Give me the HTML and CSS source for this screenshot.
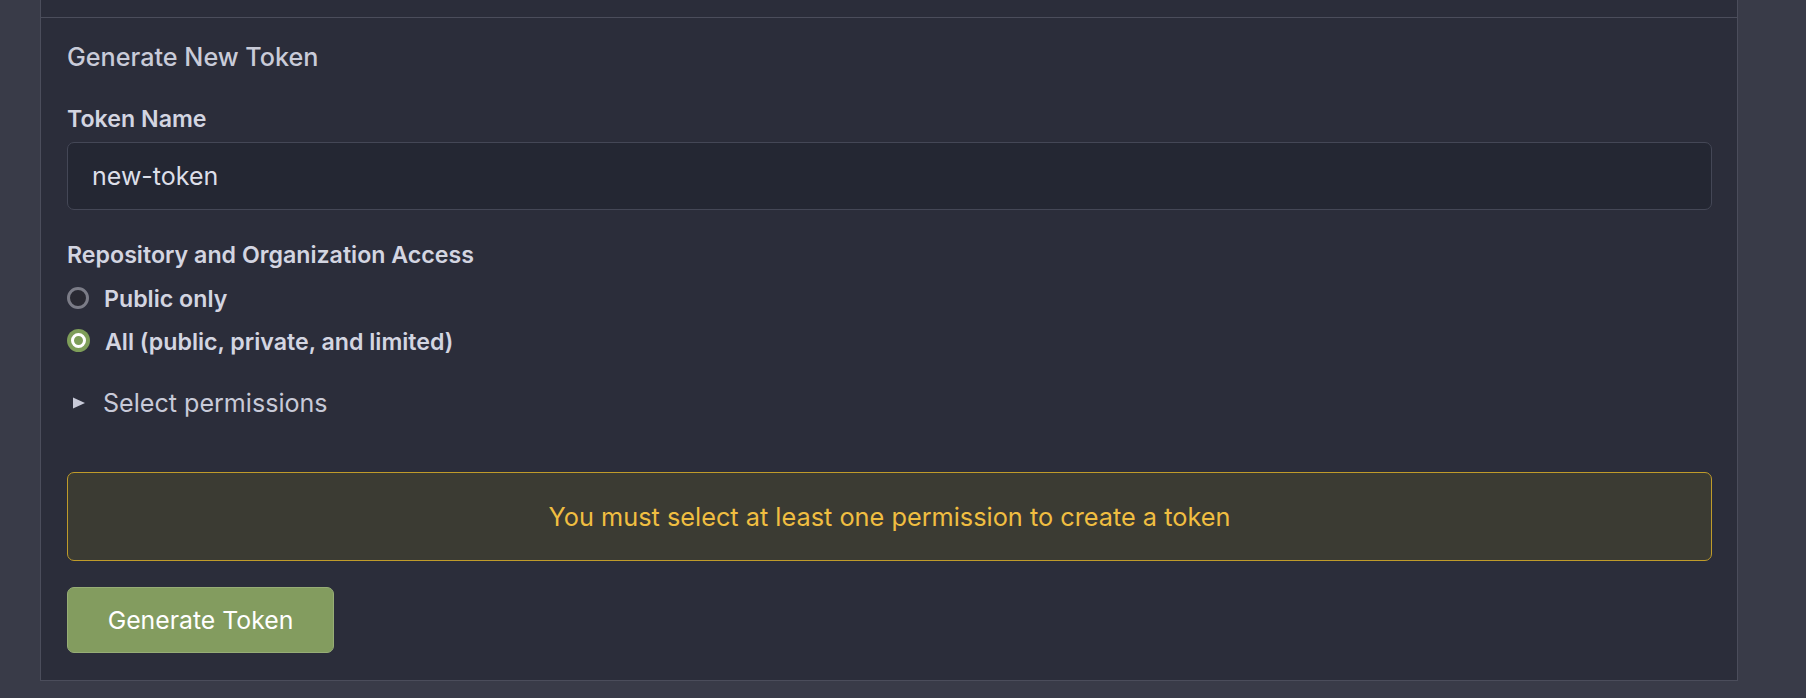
FILE: index.html
```html
<!DOCTYPE html>
<html lang="en">
<head>
<meta charset="utf-8">
<title>Generate New Token</title>
<link rel="stylesheet" href="styles.css">
</head>
<body>
<div class="panel">
  <div class="panel-prev"></div>
  <section class="token-form">
    <h2 class="title">Generate New Token</h2>

    <label class="field-label" for="token-name">Token Name</label>
    <input class="text-input" id="token-name" type="text" value="new-token">

    <div class="group-label">Repository and Organization Access</div>
    <div class="radio-list">
      <label class="radio-row">
        <span class="radio"></span>
        <span class="radio-text">Public only</span>
      </label>
      <label class="radio-row">
        <span class="radio checked"></span>
        <span class="radio-text">All (public, private, and limited)</span>
      </label>
    </div>

    <div class="disclosure">
      <svg class="disclosure-icon" width="12" height="12" viewBox="0 0 12 12"><polygon points="0,0.5 12,6 0,11.5" fill="#c8cad8"/></svg>
      <span class="disclosure-text">Select permissions</span>
    </div>

    <div class="warning">You must select at least one permission to create a token</div>

    <button class="btn-generate" type="button">Generate Token</button>
  </section>
</div>
</body>
</html>
```
FILE: styles.css
```css
html, body {
  margin: 0;
  padding: 0;
}

body {
  background: #393b48;
  min-height: 698px;
  font-family: Inter, "Noto Sans", sans-serif;
}

.panel {
  margin-left: 40px;
  width: 1698px;
  box-sizing: border-box;
  background: #2b2d3a;
  border-left: 1px solid #4b4d5b;
  border-right: 1px solid #4b4d5b;
  border-bottom: 1px solid #4b4d5b;
}

.panel-prev {
  height: 17px;
}

.token-form {
  border-top: 1px solid #4b4d5b;
  padding: 24px 25px 27px 26px;
  display: flex;
  flex-direction: column;
  align-items: stretch;
}

.title {
  margin: 0 0 33px;
  font-size: 25.2px;
  line-height: 30px;
  font-weight: 500;
  color: #c9cbd8;
}

.field-label,
.group-label {
  font-size: 23.2px;
  line-height: 28px;
  font-weight: 600;
  color: #d3d5e1;
}

.field-label {
  margin-bottom: 9px;
}

.text-input {
  box-sizing: border-box;
  height: 68px;
  margin: 0 0 31px;
  padding: 0 24px;
  background: #242733;
  border: 1px solid #444756;
  border-radius: 7px;
  font-family: Inter, "Noto Sans", sans-serif;
  font-size: 25px;
  color: #dddfe9;
  outline: none;
}

.group-label {
  margin-bottom: 16px;
}

.radio-list {
  display: flex;
  flex-direction: column;
  gap: 15px;
  margin-bottom: 32px;
}

.radio-row {
  display: flex;
  align-items: center;
  gap: 15px;
  height: 28px;
}

.radio {
  box-sizing: border-box;
  width: 22px;
  height: 22px;
  margin-bottom: 3px;
  border-radius: 50%;
  border: 3px solid #7b7c87;
  background: #2a2a33;
  flex: none;
  display: flex;
  align-items: center;
  justify-content: center;
}

.radio.checked {
  width: 23px;
  height: 23px;
  border: none;
  background: #7e9e59;
}

.radio.checked::after {
  content: "";
  box-sizing: border-box;
  width: 15px;
  height: 15px;
  border-radius: 50%;
  border: 3px solid #ffffff;
  background: #7e9e59;
}

.radio-text {
  font-size: 23.2px;
  line-height: 28px;
  font-weight: 600;
  color: #d3d5e1;
}

.disclosure {
  display: flex;
  align-items: center;
  gap: 18px;
  height: 30px;
  padding-left: 6px;
  margin-bottom: 54px;
}

.disclosure-icon {
  flex: none;
}

.disclosure-text {
  font-size: 25.1px;
  line-height: 30px;
  font-weight: 400;
  color: #c8cad8;
}

.warning {
  box-sizing: border-box;
  height: 89px;
  margin-bottom: 26px;
  display: flex;
  align-items: center;
  justify-content: center;
  background: #3b3b33;
  border: 1px solid #bf9b2a;
  border-radius: 7px;
  font-size: 25.3px;
  font-weight: 400;
  color: #f0be41;
}

.btn-generate {
  align-self: flex-start;
  box-sizing: border-box;
  width: 267px;
  height: 66px;
  padding: 0;
  background: #839c5f;
  border: 1px solid #97ad76;
  border-radius: 7px;
  font-family: Inter, "Noto Sans", sans-serif;
  font-size: 24.8px;
  font-weight: 400;
  color: #ffffff;
  cursor: pointer;
}
```
